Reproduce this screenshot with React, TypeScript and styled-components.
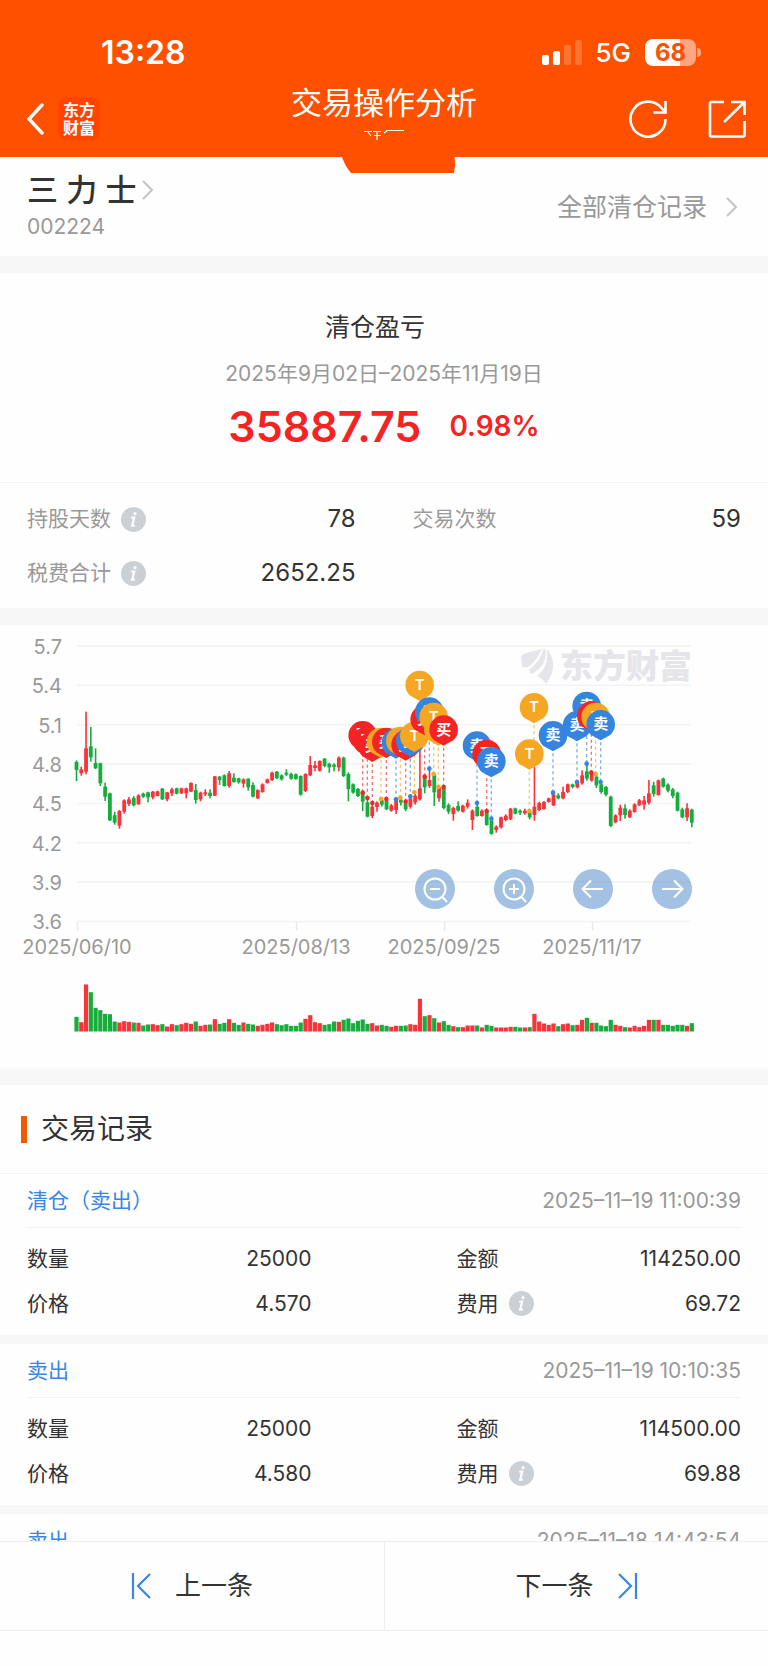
import React from 'react';
import styled, { createGlobalStyle } from 'styled-components';

const GlobalStyle = createGlobalStyle`
  *, *::before, *::after { box-sizing: border-box; }
  body { margin: 0; background: #fefefe; }
  body, button { font-family: Inter, "Noto Sans CJK SC", sans-serif; }
  button { border: 0; padding: 0; background: none; color: inherit; cursor: pointer; }
  a { color: inherit; text-decoration: none; }
  h1, h2, h3, p, dl, dd { margin: 0; font-weight: 400; }
  svg { display: block; flex: none; }
`;

const Shell = styled.div`
  display: flex;
  flex-direction: column;
  height: 100vh;
  color: #333;
`;

const Header = styled.header`
  position: relative;
  z-index: 1;
  flex: none;
  background: #ff5000;
  color: #fff;
`;

const StatusBar = styled.div`
  display: flex;
  align-items: center;
  justify-content: space-between;
  height: 80px;
  padding: 24px 67px 0 101px;
`;

const Clock = styled.span`
  font-size: 32px;
  font-weight: 600;
`;

const StatusIcons = styled.div`
  display: flex;
  align-items: center;
`;

const Network = styled.span`
  margin: 2px 14px 0 13px;
  font-size: 26px;
  line-height: 32px;
  font-weight: 500;
`;

const Battery = styled.span`
  width: 51px;
  height: 27px;
  border-radius: 8px;
  background: linear-gradient(90deg, #fff 68%, #ffa782 68%);
  color: #ff5000;
  font-size: 24px;
  line-height: 27px;
  font-weight: 700;
  text-align: center;
`;

const BatteryCap = styled.span`
  width: 4px;
  height: 9px;
  margin-left: 1px;
  border-radius: 0 4px 4px 0;
  background: #ffa782;
`;

const NavBar = styled.nav`
  display: grid;
  grid-template-columns: 1fr auto 1fr;
  height: 77px;
`;

const NavSide = styled.div<{ $end?: boolean }>`
  display: flex;
  align-items: center;
  justify-content: ${p => (p.$end ? 'flex-end' : 'flex-start')};
  gap: ${p => (p.$end ? 40 : 14)}px;
  padding: 0 22px 0 27px;
`;

const NavCenter = styled.div`
  display: flex;
  flex-direction: column;
  align-items: center;
`;

const NavTitle = styled.h1`
  font-size: 31px;
  line-height: 46px;
`;

const Brand = styled.span`
  display: flex;
  flex-direction: column;
  justify-content: center;
  width: 42px;
  height: 43px;
  border-radius: 9px;
  background: #ff4300;
  font-size: 16px;
  line-height: 18px;
  font-weight: 700;
  text-align: center;
`;

const HeaderNotch = styled.svg`
  position: absolute;
  top: 100%;
  left: 50%;
  margin-left: -42px;
`;

const Content = styled.main`
  flex: 1;
  min-height: 0;
  overflow-y: auto;
  scrollbar-width: none;
`;

const Panel = styled.section<{ $gap?: number }>`
  background: #fefefe;
  border-bottom: ${p => p.$gap ?? 17}px solid #f7f7f7;
`;

const StockPanel = styled(Panel)`
  display: flex;
  align-items: center;
  justify-content: space-between;
  height: 116px;
  padding: 0 30px 0 27px;
`;

const StockName = styled.h2`
  display: flex;
  align-items: center;
  gap: 5px;
  font-size: 31px;
  line-height: 40px;
  font-weight: 500;
`;

const StockCode = styled.p`
  color: #999;
  font-size: 21px;
  line-height: 34px;
`;

const AllLink = styled.a`
  display: flex;
  align-items: center;
  gap: 19px;
  color: #999;
  font-size: 25px;
  line-height: 32px;
`;

const Summary = styled.div`
  padding: 36px 0 30px;
  border-bottom: 1px solid #f3f3f3;
  text-align: center;
`;

const SummaryTitle = styled.h2`
  padding-right: 18px;
  font-size: 25px;
  line-height: 36px;
`;

const SummaryDate = styled.p`
  margin-top: 15px;
  color: #999;
  font-size: 21px;
  line-height: 28px;
`;

const Profit = styled.p`
  display: flex;
  align-items: center;
  justify-content: center;
  gap: 28px;
  margin-top: 12px;
  color: #f52323;
  line-height: 52px;
  font-weight: 600;
`;

const Amount = styled.strong`
  font-size: 43px;
  font-weight: 600;
`;

const Percent = styled.span`
  font-size: 28px;
`;

const StatGrid = styled.dl`
  display: grid;
  grid-template-columns: 1fr 1fr;
  column-gap: 57px;
  grid-auto-rows: 54px;
  padding: 9px 27px 8px;
`;

const RecordGrid = styled(StatGrid)`
  column-gap: 145px;
  grid-auto-rows: 45px;
  padding: 8px 27px 9px;
`;

const Pair = styled.div`
  display: flex;
  align-items: center;
  justify-content: space-between;
`;

const Label = styled.dt<{ $muted?: boolean }>`
  display: flex;
  align-items: center;
  gap: 10px;
  color: ${p => (p.$muted ? '#999' : '#333')};
  font-size: 21px;
  line-height: 26px;
`;

const Value = styled.dd<{ $large?: boolean }>`
  font-size: ${p => (p.$large ? 24 : 21)}px;
  line-height: 26px;
`;

const InfoButton = styled.button`
  width: 25px;
  height: 25px;
  border-radius: 50%;
  background: #cbd0d6;
`;

const ChartPanel = styled(Panel)`
  position: relative;
`;

const ChartSvg = styled.svg`
  width: 100%;
  height: auto;
`;

const ChartTools = styled.div`
  position: absolute;
  right: 76px;
  bottom: 36%;
  display: flex;
  gap: 39px;
`;

const ToolButton = styled.button`
  width: 40px;
  height: 40px;
  border-radius: 50%;
  background: rgba(72, 132, 200, 0.5);
`;

const SectionTitle = styled.h2`
  display: flex;
  align-items: center;
  gap: 14px;
  height: 89px;
  padding: 0 21px;
  border-bottom: 1px solid #f3f3f3;
  font-size: 28px;
  line-height: 36px;

  &::before {
    content: '';
    width: 6px;
    height: 27px;
    background: #f05a00;
  }
`;

const RecordHead = styled.div`
  display: flex;
  align-items: center;
  justify-content: space-between;
  height: 54px;
  margin: 0 27px;
  border-bottom: 1px solid #f3f3f3;
  color: #999;
  font-size: 21px;
  line-height: 26px;
`;

const RecordKind = styled.h3`
  color: #3a85e6;
  font-size: 21px;
`;

const Footer = styled.footer`
  display: grid;
  grid-template-columns: 1fr 1fr;
  flex: none;
  height: 125px;
  padding-bottom: 35px;
  background: #fefefe;
  border-top: 1px solid #eee;
`;

const PagerButton = styled.button`
  display: flex;
  align-items: center;
  justify-content: center;
  gap: 24px;
  border-bottom: 1px solid #eee;
  color: #333;
  font-size: 26px;
  line-height: 32px;

  & + & { border-left: 1px solid #eee; }
`;

const RED = '#fa3239';
const GREEN = '#16ad3c';

// Each entry: direction, wick top, body top, body bottom, wick bottom, volume.
// Values are thirds of a chart unit.
type Candle = [string, number, number, number, number, number];
const candles: Candle[] = [
  ['g', 391, 396, 420, 453, 44], ['r', 410, 418, 430, 437, 28], ['r', 245, 355, 425, 433, 141], ['g', 291, 349, 382, 395, 118],
  ['g', 355, 399, 415, 417, 71], ['g', 398, 400, 460, 468, 64], ['g', 458, 470, 500, 513, 53], ['g', 488, 490, 571, 573, 52],
  ['g', 545, 556, 578, 584, 30], ['r', 540, 543, 587, 596, 27], ['r', 508, 511, 545, 551, 31], ['r', 501, 508, 522, 528, 29],
  ['g', 498, 504, 526, 529, 27], ['r', 493, 496, 523, 524, 26], ['g', 488, 491, 500, 504, 18], ['g', 485, 487, 502, 517, 21],
  ['r', 483, 485, 502, 508, 22], ['r', 482, 484, 498, 499, 19], ['g', 474, 476, 508, 510, 22], ['r', 486, 487, 508, 514, 15],
  ['r', 473, 478, 490, 498, 22], ['g', 473, 475, 491, 493, 19], ['r', 473, 475, 490, 492, 22], ['r', 473, 475, 490, 505, 26],
  ['r', 457, 459, 485, 486, 23], ['g', 462, 480, 510, 521, 30], ['r', 485, 488, 508, 514, 17], ['r', 478, 487, 493, 498, 20],
  ['g', 478, 488, 498, 505, 21], ['r', 438, 439, 497, 498, 37], ['g', 438, 440, 450, 465, 23], ['g', 433, 436, 468, 470, 26],
  ['r', 423, 430, 468, 473, 37], ['g', 430, 443, 456, 458, 26], ['g', 443, 445, 457, 461, 20], ['r', 445, 448, 461, 473, 27],
  ['g', 445, 446, 472, 482, 23], ['g', 457, 465, 500, 502, 21], ['r', 478, 480, 505, 507, 17], ['r', 460, 463, 486, 488, 20],
  ['r', 446, 448, 459, 461, 23], ['r', 425, 428, 450, 453, 27], ['g', 423, 425, 445, 447, 22], ['g', 433, 436, 448, 452, 19],
  ['g', 418, 428, 434, 438, 22], ['g', 428, 432, 446, 449, 17], ['g', 430, 433, 447, 449, 17], ['g', 436, 438, 494, 497, 27],
  ['r', 430, 432, 483, 486, 38], ['r', 378, 405, 436, 438, 49], ['r', 393, 406, 414, 424, 28], ['r', 391, 393, 422, 425, 25],
  ['g', 384, 386, 408, 412, 20], ['g', 398, 401, 412, 428, 22], ['g', 400, 404, 410, 424, 30], ['r', 379, 383, 412, 424, 29],
  ['g', 380, 383, 438, 441, 35], ['g', 427, 432, 477, 514, 39], ['g', 460, 463, 488, 491, 25], ['g', 474, 477, 498, 501, 32],
  ['g', 483, 486, 515, 543, 36], ['g', 508, 517, 560, 562, 23], ['r', 518, 530, 558, 564, 25], ['r', 514, 518, 531, 545, 18],
  ['g', 508, 510, 524, 530, 20], ['g', 505, 512, 538, 540, 17], ['r', 522, 526, 542, 545, 14], ['r', 508, 510, 540, 552, 17],
  ['g', 505, 509, 518, 527, 17], ['g', 515, 520, 538, 544, 18], ['r', 500, 505, 530, 536, 22], ['r', 488, 497, 517, 524, 20],
  ['r', 340, 475, 508, 512, 98], ['g', 438, 440, 472, 490, 46], ['r', 415, 450, 468, 474, 49], ['g', 430, 433, 487, 528, 40],
  ['r', 468, 471, 505, 515, 27], ['g', 468, 475, 534, 538, 31], ['g', 520, 525, 545, 552, 20], ['r', 530, 534, 552, 572, 16],
  ['g', 514, 528, 542, 545, 13], ['r', 524, 527, 545, 548, 13], ['r', 508, 518, 530, 536, 18], ['r', 538, 542, 570, 600, 18],
  ['g', 518, 530, 558, 560, 18], ['r', 538, 542, 558, 560, 12], ['g', 540, 545, 585, 587, 20], ['g', 566, 572, 612, 614, 17],
  ['r', 586, 590, 600, 608, 12], ['r', 560, 562, 592, 596, 12], ['r', 553, 557, 570, 574, 12], ['r', 534, 536, 568, 570, 14],
  ['g', 533, 535, 551, 553, 14], ['g', 538, 542, 548, 555, 12], ['r', 536, 542, 550, 554, 12], ['g', 540, 545, 562, 568, 13],
  ['r', 410, 530, 555, 572, 53], ['r', 515, 519, 540, 543, 30], ['r', 513, 516, 537, 539, 24], ['r', 503, 505, 516, 518, 20],
  ['r', 488, 493, 526, 528, 24], ['g', 490, 496, 505, 508, 16], ['r', 470, 486, 505, 508, 22], ['r', 461, 463, 486, 489, 24],
  ['g', 461, 463, 471, 475, 19], ['r', 455, 458, 472, 475, 20], ['r', 421, 436, 460, 464, 35], ['g', 400, 424, 446, 452, 41],
  ['r', 427, 430, 452, 455, 26], ['g', 430, 440, 466, 474, 26], ['g', 455, 463, 486, 491, 18], ['g', 468, 471, 494, 499, 16],
  ['g', 497, 500, 588, 591, 35], ['r', 553, 556, 577, 580, 20], ['r', 524, 533, 556, 573, 17], ['g', 523, 535, 555, 566, 13],
  ['r', 538, 542, 562, 564, 12], ['r', 520, 523, 546, 548, 17], ['r', 507, 511, 526, 528, 13], ['r', 498, 511, 524, 539, 17],
  ['r', 450, 490, 518, 524, 35], ['g', 455, 466, 492, 500, 35], ['r', 449, 451, 495, 497, 35], ['g', 443, 446, 470, 473, 20],
  ['g', 460, 464, 482, 487, 20], ['g', 474, 478, 498, 505, 17], ['g', 485, 488, 542, 544, 20], ['g', 533, 538, 562, 565, 20],
  ['r', 520, 535, 562, 573, 17], ['g', 536, 539, 578, 592, 25],
];

// Trade markers: x, pin centre, anchor dot (0 when it has none), label.
type Trade = [number, number, number, '买' | '卖' | 'T'];
const trades: Trade[] = [
  [1088, 316, 488, '买'], [1102, 332, 504, '买'], [1117, 348, 519, '买'], [1143, 336, 507, 'T'],
  [1159, 336, 507, '买'], [1188, 338, 508, '卖'], [1201, 333, 503, 'T'], [1217, 344, 515, '买'],
  [1231, 332, 499, '卖'], [1243, 318, 487, 'T'], [1259, 165, 0, 'T'], [1274, 268, 440, '买'],
  [1288, 245, 416, '卖'], [1315, 299, 471, 'T'], [1301, 261, 432, 'T'], [1331, 299, 471, '买'],
  [1431, 347, 519, '卖'], [1460, 372, 543, '买'], [1474, 394, 566, '卖'], [1602, 232, 330, 'T'],
  [1588, 371, 543, 'T'], [1659, 316, 488, '卖'], [1731, 286, 456, '卖'], [1760, 228, 401, '卖'],
  [1774, 257, 428, '买'], [1787, 261, 432, 'T'], [1802, 283, 456, '卖'],
];
const tradeColor = { 买: '#f52424', 卖: '#3584e0', T: '#f5a623' };

const levels = ['5.7', '5.4', '5.1', '4.8', '4.5', '4.2', '3.9', '3.6'];
const ticks: [number, string][] = [[77, '2025/06/10'], [296, '2025/08/13'], [444, '2025/09/25'], [592, '2025/11/17']];

const cy = (v: number) => v / 3 + 5;
const cx = (i: number) => 76.5 + i * 4.77;

function Chart() {
  return (
    <ChartSvg viewBox="0 0 768 443" role="img" aria-label="股价走势与买卖点">
      {levels.map((level, i) => {
        const y = 21 + i * 39.35;
        return (
          <g key={level}>
            <line x1="77" x2="691" y1={y} y2={y} stroke="#f3f3f3" strokeWidth="1.5" />
            <text x="62" y={y + 8} textAnchor="end" fontSize="20" fill="#999">{level}</text>
          </g>
        );
      })}
      {ticks.map(([x, label]) => (
        <g key={label}>
          <line x1={x + 0.5} x2={x + 0.5} y1="297" y2="306" stroke="#eaeaea" strokeWidth="1.5" />
          <text x={x} y="329" textAnchor="middle" fontSize="20" fill="#999">{label}</text>
        </g>
      ))}
      <g fill="#e5e5ea">
        <path d="M521 31Q524 28 534 26L542 24Q536 36 530 41Q526 43 522 42Z" />
        <path d="M544 23Q548 28 543 39Q537 47 531 49L529 45Q541 35 544 23Z" />
        <path d="M547 24Q554 32 553 43Q552 51 546 59Q542 53 537 51Q549 42 547 24Z" />
        <text x="560" y="53" fontSize="33" fontWeight="900">东方财富</text>
      </g>
      {candles.map(([dir, high, top, bottom, low, volume], i) => (
        <g key={i} fill={dir === 'r' ? RED : GREEN}>
          <rect x={cx(i) - 0.8} y={cy(high)} width="1.6" height={(low - high) / 3} />
          <rect x={cx(i) - 1.9} y={cy(top)} width="3.8" height={(bottom - top) / 3} />
          <rect x={cx(i) - 2.1} y={406.5 - volume / 3} width="4.2" height={volume / 3} />
        </g>
      ))}
      {trades.filter(t => t[2] > 0).map(([x, y, dot, label]) => (
        <g key={x} stroke={tradeColor[label]} fill={tradeColor[label]}>
          <line x1={x / 3} x2={x / 3} y1={cy(y) + 18} y2={cy(dot)} strokeWidth="1.3" strokeDasharray="3 3" opacity="0.65" />
          {x !== 1602 && <circle cx={x / 3} cy={cy(dot)} r="2.3" stroke="none" />}
        </g>
      ))}
      {trades.map(([x, y, , label]) => (
        <g key={x} transform={`translate(${x / 3} ${cy(y)})`}>
          <path d="M0 16L-9.6 10.6A14.3 14.3 0 1 1 9.6 10.6Z" fill={tradeColor[label]} />
          <text y="5" textAnchor="middle" fontSize="15" fontWeight="600" fill="#fff">{label}</text>
        </g>
      ))}
    </ChartSvg>
  );
}

function Chevron() {
  return (
    <svg width="12" height="20" viewBox="0 0 12 20" fill="none" stroke="#c4c4c4" strokeWidth="2">
      <path d="M1 1L10 10L1 19" />
    </svg>
  );
}

function Info({ topic }: { topic: string }) {
  return (
    <InfoButton type="button" aria-label={`${topic}说明`}>
      <svg width="25" height="25" viewBox="0 0 25 25" fill="none" stroke="#fff" strokeWidth="2.2">
        <circle cx="14" cy="6.7" r="1.6" fill="#fff" stroke="none" />
        <path d="M10.3 10.6H13.2L11.2 18.7H13.8" />
      </svg>
    </InfoButton>
  );
}

const tools: [string, React.ReactNode][] = [
  ['缩小', <><circle cx="20" cy="20" r="10.5" /><path d="M27.5 28L32 33M15 20H25" /></>],
  ['放大', <><circle cx="20" cy="20" r="10.5" /><path d="M27.5 28L32 33M15 20H25M20 15V25" /></>],
  ['向左', <path d="M30 20H10M18 11.5L9.5 20L18 28.5" />],
  ['向右', <path d="M10 20H30M22 11.5L30.5 20L22 28.5" />],
];

const records = [
  { kind: '清仓（卖出）', time: '2025–11–19 11:00:39', quantity: '25000', price: '4.570', total: '114250.00', fee: '69.72' },
  { kind: '卖出', time: '2025–11–19 10:10:35', quantity: '25000', price: '4.580', total: '114500.00', fee: '69.88' },
  { kind: '卖出', time: '2025–11–18 14:43:54' },
];

export default function App() {
  return (
    <Shell>
      <GlobalStyle />
      <Header>
        <StatusBar>
          <Clock>13:28</Clock>
          <StatusIcons>
            <svg width="40" height="26" viewBox="0 0 40 26" fill="#fff">
              <rect x="0" y="16" width="7" height="10" rx="2" />
              <rect x="11" y="12" width="7" height="14" rx="2" />
              <rect x="22" y="6" width="7" height="20" rx="2" opacity="0.2" />
              <rect x="33" y="1" width="7" height="25" rx="2" opacity="0.2" />
            </svg>
            <Network>5G</Network>
            <Battery>68</Battery>
            <BatteryCap />
          </StatusIcons>
        </StatusBar>
        <NavBar>
          <NavSide>
            <button type="button" aria-label="返回">
              <svg width="17" height="32" viewBox="0 0 17 32" fill="none" stroke="#fff" strokeWidth="3.4" strokeLinecap="round">
                <path d="M15 2L2 16L15 30" />
              </svg>
            </button>
            <Brand><span>东方</span><span>财富</span></Brand>
          </NavSide>
          <NavCenter>
            <NavTitle>交易操作分析</NavTitle>
            <svg width="42" height="14" viewBox="0 0 42 14" fill="none" stroke="#fff" strokeWidth="1.2">
              <path d="M1 5.500H9M5 6L8 10M10 5.500H18M14 5.500V14M11 9.500H18M21 7L24 5M23 4.500H41" />
            </svg>
          </NavCenter>
          <NavSide $end>
            <button type="button" aria-label="刷新">
              <svg width="40" height="40" viewBox="0 0 40 40" fill="none" stroke="#fff" strokeWidth="2.6">
                <path d="M37.500 20A17.500 17.500 0 1 1 33.500 9L37 13" />
                <path d="M37.500 2V13.500H25.500" />
              </svg>
            </button>
            <button type="button" aria-label="分享">
              <svg width="38" height="38" viewBox="0 0 38 38" fill="none" stroke="#fff" strokeWidth="2.6">
                <path d="M16 2H3.500Q2 2 2 3.500V35Q2 36.500 3.500 36.500H35Q36.500 36.500 36.500 35V21" />
                <path d="M23 2H36.500V15M36 2.500L16 22" />
              </svg>
            </button>
          </NavSide>
        </NavBar>
        <HeaderNotch width="114" height="16" viewBox="0 0 114 16" aria-hidden="true">
          <path d="M0 0H112.500Q114 8 112 16H9Q3 9 0 0Z" fill="#ff5000" />
        </HeaderNotch>
      </Header>

      <Content>
        <StockPanel>
          <div>
            <StockName>三 力 士<Chevron /></StockName>
            <StockCode>002224</StockCode>
          </div>
          <AllLink href="#records">全部清仓记录<Chevron /></AllLink>
        </StockPanel>

        <Panel>
          <Summary>
            <SummaryTitle>清仓盈亏</SummaryTitle>
            <SummaryDate>2025年9月02日–2025年11月19日</SummaryDate>
            <Profit><Amount>35887.75</Amount><Percent>0.98%</Percent></Profit>
          </Summary>
          <StatGrid>
            <Pair><Label $muted>持股天数<Info topic="持股天数" /></Label><Value $large>78</Value></Pair>
            <Pair><Label $muted>交易次数</Label><Value $large>59</Value></Pair>
            <Pair><Label $muted>税费合计<Info topic="税费合计" /></Label><Value $large>2652.25</Value></Pair>
          </StatGrid>
        </Panel>

        <ChartPanel>
          <Chart />
          <ChartTools>
            {tools.map(([name, icon]) => (
              <ToolButton key={name} type="button" aria-label={name}>
                <svg width="40" height="40" viewBox="0 0 40 40" fill="none" stroke="#fff" strokeWidth="2">{icon}</svg>
              </ToolButton>
            ))}
          </ChartTools>
        </ChartPanel>

        <SectionTitle id="records">交易记录</SectionTitle>
        {records.map(r => (
          <Panel key={r.time} $gap={9}>
            <RecordHead><RecordKind>{r.kind}</RecordKind><time>{r.time}</time></RecordHead>
            {r.quantity && (
              <RecordGrid>
                <Pair><Label>数量</Label><Value>{r.quantity}</Value></Pair>
                <Pair><Label>金额</Label><Value>{r.total}</Value></Pair>
                <Pair><Label>价格</Label><Value>{r.price}</Value></Pair>
                <Pair><Label>费用<Info topic="费用" /></Label><Value>{r.fee}</Value></Pair>
              </RecordGrid>
            )}
          </Panel>
        ))}
      </Content>

      <Footer>
        <PagerButton type="button">
          <svg width="20" height="26" viewBox="0 0 20 26" fill="none" stroke="#3a85e6" strokeWidth="2.2">
            <path d="M2 0V26M19 1L7 13L19 25" />
          </svg>
          上一条
        </PagerButton>
        <PagerButton type="button">
          下一条
          <svg width="20" height="26" viewBox="0 0 20 26" fill="none" stroke="#3a85e6" strokeWidth="2.2">
            <path d="M18 0V26M1 1L13 13L1 25" />
          </svg>
        </PagerButton>
      </Footer>
    </Shell>
  );
}
